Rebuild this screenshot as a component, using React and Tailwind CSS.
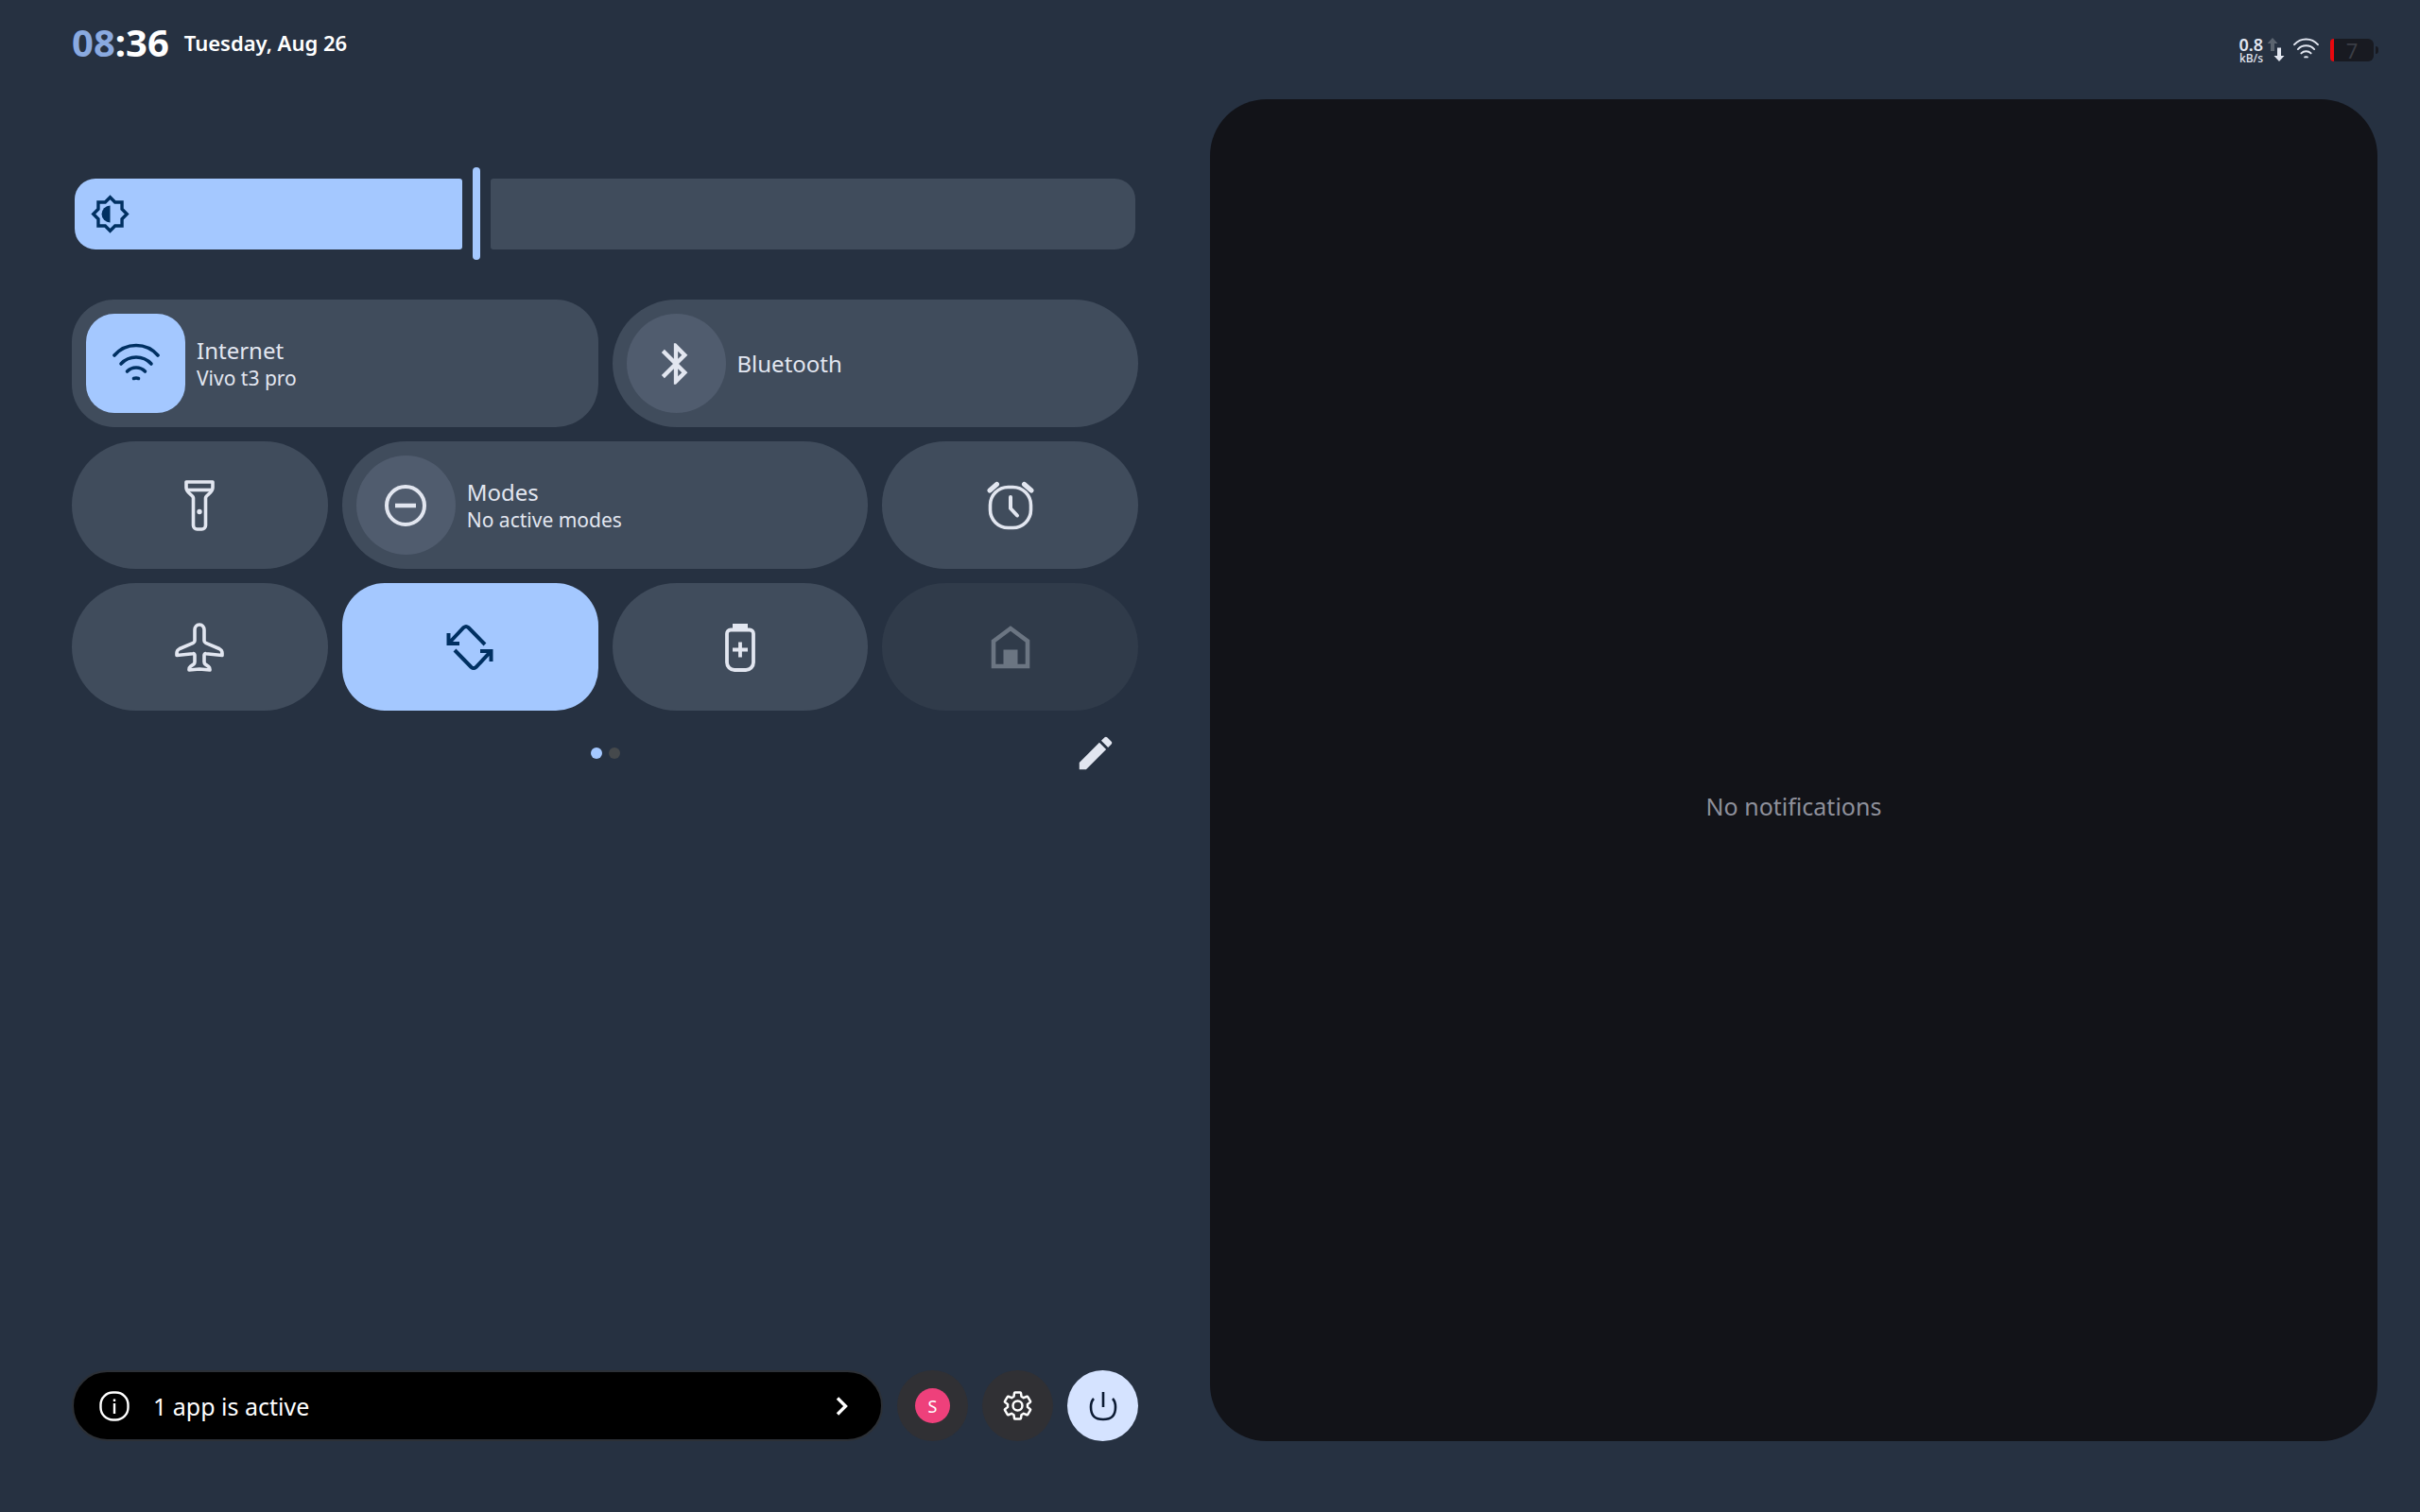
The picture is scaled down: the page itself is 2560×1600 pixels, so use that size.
import { useState } from "react"
import clsx from "clsx"
import { MdBluetooth, MdEdit } from "react-icons/md"

export default function App() {
  return (
    <div className="min-h-screen flex flex-col bg-[#263141] text-[#e2e6f0] font-['Noto_Sans','Open_Sans',sans-serif]">
      <StatusBar />
      <main className="flex-1 grid grid-cols-2 pb-[75px]">
        <section className="flex flex-col px-[76px]" aria-label="Quick settings">
          <BrightnessSlider />
          <QuickTiles />
          <PageControls />
          <FooterActions />
        </section>
        <section className="mr-[45px] rounded-[60px] bg-[#121318] flex items-center justify-center pt-[75px]">
          <p className="text-[25px] leading-8 text-[#8e909b]">No notifications</p>
        </section>
      </main>
    </div>
  )
}

function StatusBar() {
  return (
    <header className="h-[105px] flex justify-between pl-[76px] pr-[44px]">
      <div className="h-[90px] flex items-center gap-4">
        <time className="text-[40px] leading-none font-bold text-white">
          <span className="text-[#8aaae0]">08</span>:36
        </time>
        <span className="text-[22px] leading-none font-semibold text-white">Tuesday, Aug 26</span>
      </div>
      <div className="flex items-center">
        <div className="flex flex-col items-end mr-1">
          <span className="text-[18px] leading-[18px] font-semibold">0.8</span>
          <span className="text-[12px] leading-3 font-medium">kB/s</span>
        </div>
        <TrafficArrows />
        <WifiIcon className="w-[27px] h-[22px] mr-3 -mt-1" />
        <Battery level={7} />
      </div>
    </header>
  )
}

function Battery({ level }) {
  return (
    <div className="flex items-center gap-[2px]">
      <div className="relative w-[46px] h-6 rounded-md bg-[#181a21] flex items-center justify-center">
        <div className="absolute inset-y-0 left-0 rounded-l-md bg-[#e8080e]" style={{ width: `${level + 2}%` }} />
        <span className="text-[22px] leading-6 text-[#3a3d45]">{level}</span>
      </div>
      <div className="w-[3px] h-2 rounded-r-full bg-[#181a21]" />
    </div>
  )
}

function BrightnessSlider() {
  const [value, setValue] = useState(37.5)

  return (
    <div className="relative mt-[72px] mx-[3px] h-[98px] flex items-center gap-[11px]">
      <div
        className="h-[75px] basis-0 rounded-l-[22px] rounded-r-[3px] bg-[#a4c8ff] flex items-center overflow-hidden"
        style={{ flexGrow: value }}
      >
        <BrightnessIcon />
      </div>
      <div className="w-2 h-full rounded-full bg-[#a4c8ff]" />
      <div
        className="h-[75px] basis-0 rounded-l-[3px] rounded-r-[22px] bg-[#404c5c]"
        style={{ flexGrow: 100 - value }}
      />
      <input
        type="range"
        min="0"
        max="100"
        step="0.5"
        value={value}
        onChange={(e) => setValue(Number(e.target.value))}
        aria-label="Display brightness"
        className="absolute inset-0 w-full h-full opacity-0 cursor-pointer"
      />
    </div>
  )
}

function QuickTiles() {
  return (
    <div className="mt-[42px] grid grid-cols-4 gap-[15px]">
      <WideTile icon={<WifiIcon className="w-[50px] h-[40px] -mt-1" />} title="Internet" subtitle="Vivo t3 pro" active />
      <WideTile icon={<MdBluetooth className="w-[52px] h-[52px]" />} title="Bluetooth" />
      <Tile label="Flashlight"><FlashlightIcon /></Tile>
      <WideTile icon={<ModesIcon />} title="Modes" subtitle="No active modes" />
      <Tile label="Alarm"><AlarmIcon /></Tile>
      <Tile label="Airplane mode"><AirplaneIcon /></Tile>
      <Tile label="Auto-rotate" active><RotateIcon /></Tile>
      <Tile label="Battery saver"><BatterySaverIcon /></Tile>
      <Tile label="Home controls" disabled><HomeIcon /></Tile>
    </div>
  )
}

function WideTile({ icon, title, subtitle, active }) {
  return (
    <button
      className={clsx(
        "col-span-2 h-[135px] bg-[#404c5c] flex items-center gap-3 px-[15px] text-left",
        active ? "rounded-[45px]" : "rounded-[68px]"
      )}
    >
      <span
        className={clsx(
          "w-[105px] h-[105px] flex items-center justify-center shrink-0",
          active ? "rounded-[30px] bg-[#a4c8ff] text-[#003062]" : "rounded-full bg-[#505c6e]"
        )}
      >
        {icon}
      </span>
      <span className="flex flex-col">
        <span className="text-[24px] leading-[30px]">{title}</span>
        {subtitle && <span className="text-[21px] leading-7">{subtitle}</span>}
      </span>
    </button>
  )
}

function Tile({ label, active, disabled, children }) {
  return (
    <button
      aria-label={label}
      disabled={disabled}
      className={clsx(
        "h-[135px] flex items-center justify-center",
        active && "rounded-[45px] bg-[#a4c8ff] text-[#003062]",
        disabled && "rounded-[68px] bg-[#303b4a] text-[#6b7582]",
        !active && !disabled && "rounded-[68px] bg-[#404c5c]"
      )}
    >
      {children}
    </button>
  )
}

function PageControls() {
  return (
    <div className="mt-[22px] h-[46px] grid grid-cols-3 items-center">
      <div className="col-start-2 flex justify-center gap-[7px]">
        <span className="w-3 h-3 rounded-full bg-[#a4c8ff]" />
        <span className="w-3 h-3 rounded-full bg-[#45494c]" />
      </div>
      <button aria-label="Edit tiles" className="justify-self-end mr-[22px]">
        <MdEdit className="w-[46px] h-[46px]" />
      </button>
    </div>
  )
}

function FooterActions() {
  return (
    <div className="mt-auto flex items-center gap-[15px]">
      <button className="flex-1 h-[75px] rounded-full border-2 border-[#2c3036] bg-black text-white flex items-center pl-[27px] pr-[34px]">
        <InfoIcon />
        <span className="ml-[25px] text-[25px] leading-8">1 app is active</span>
        <ChevronIcon />
      </button>
      <button aria-label="Switch user" className="w-[75px] h-[75px] rounded-full bg-[#303034] flex items-center justify-center">
        <span className="w-[37px] h-[37px] rounded-full bg-[#ee407b] text-white text-[18px] leading-none flex items-center justify-center">
          S
        </span>
      </button>
      <button aria-label="Settings" className="w-[75px] h-[75px] rounded-full bg-[#303034] text-white flex items-center justify-center">
        <GearIcon />
      </button>
      <button aria-label="Power" className="w-[75px] h-[75px] rounded-full bg-[#d5e3ff] text-[#0c1b33] flex items-center justify-center">
        <PowerIcon />
      </button>
    </div>
  )
}

/* Icons */

function WifiIcon({ className }) {
  return (
    <svg className={className} viewBox="0 0 50 40" fill="none" stroke="currentColor" strokeWidth="3.6" strokeLinecap="round">
      <path d="M2 13A30.4 30.4 0 0 1 48 13" />
      <path d="M9 22A21.8 21.8 0 0 1 41 22" />
      <path d="M15.5 30A13.3 13.3 0 0 1 34.5 30" />
      <path d="M22.5 37.5A7 7 0 0 1 27.5 37.5" />
    </svg>
  )
}

function TrafficArrows() {
  return (
    <svg className="mr-2" width="20" height="28" viewBox="0 0 20 28">
      <path d="M6 1l5.5 6H8v8H4V7H.5z" fill="#5b646f" />
      <path d="M11 11.5h4V20h3.5L13 26l-5.5-6H11z" fill="currentColor" />
    </svg>
  )
}

function BrightnessIcon() {
  return (
    <svg className="ml-4 shrink-0 text-[#003062]" width="43" height="43" viewBox="0 0 24 24">
      <path
        d="M12 2.1L9.1 5H5v4.1L2.1 12L5 14.9V19h4.1l2.9 2.9l2.9-2.9H19v-4.1l2.9-2.9L19 9.1V5h-4.1z"
        fill="none"
        stroke="currentColor"
        strokeWidth="1.9"
      />
      <path d="M12 7a5 5 0 0 0 0 10z" fill="currentColor" />
    </svg>
  )
}

function FlashlightIcon() {
  return (
    <svg width="32" height="54" viewBox="0 0 32 54" fill="none" stroke="currentColor" strokeWidth="3.6" strokeLinejoin="round">
      <path d="M2 2h28v6c0 6-7.5 7.5-7.5 11v29a4 4 0 0 1-4 4h-5a4 4 0 0 1-4-4V19C9.5 15.5 2 14 2 8z" />
      <path d="M2 10.5h28" />
      <circle cx="16" cy="33.5" r="2.7" fill="currentColor" stroke="none" />
    </svg>
  )
}

function ModesIcon() {
  return (
    <svg width="46" height="46" viewBox="0 0 46 46" fill="none" stroke="currentColor" strokeWidth="4">
      <circle cx="23" cy="23" r="20" />
      <path d="M12 23h22" strokeWidth="4.5" />
    </svg>
  )
}

function AlarmIcon() {
  return (
    <svg width="50" height="52" viewBox="0 0 50 52" fill="none" stroke="currentColor" strokeWidth="3.6" strokeLinecap="round" strokeLinejoin="round">
      <rect x="3.5" y="6.5" width="43" height="43" rx="19" />
      <path d="M3 10l7.5-6.5M47 10l-7.5-6.5" strokeWidth="5" />
      <path d="M25 17v12l7 7.5" strokeWidth="4" />
    </svg>
  )
}

function AirplaneIcon() {
  return (
    <svg width="52" height="52" viewBox="0 0 52 52" fill="none" stroke="currentColor" strokeWidth="3.6" strokeLinejoin="round">
      <path d="M26 2c-3 0-5 2.4-5 5.5v11.5c0 1.2-.5 1.8-1.6 2.3L5 27.5c-2 1-3 2.6-3 4.5v2.5l17-1.8c1.4-.2 2 .4 2 1.8v7c0 1.2-.4 1.8-1.3 2.5l-3.2 2.3c-1.2.9-1.5 1.7-1.5 3.2v.5l11-1 11 1v-.5c0-1.5-.3-2.3-1.5-3.2l-3.2-2.3c-.9-.7-1.3-1.3-1.3-2.5v-7c0-1.4.6-2 2-1.8l17 1.8V32c0-1.9-1-3.5-3-4.5l-14.4-6.2c-1.1-.5-1.6-1.1-1.6-2.3V7.5C31 4.4 29 2 26 2z" />
    </svg>
  )
}

function RotateIcon() {
  return (
    <svg width="50" height="50" viewBox="0 0 50 50" fill="none" stroke="currentColor" strokeWidth="4">
      <path d="M2.5 10v11h11.5M2.5 21L18.5 4q2.5-2 5 0L41 22" />
      <path d="M9 28l17.5 18q2.5 2 5 0L47.5 29M36 29h11.5v11" />
    </svg>
  )
}

function BatterySaverIcon() {
  return (
    <svg width="32" height="52" viewBox="0 0 32 52" fill="none" stroke="currentColor" strokeWidth="3.8">
      <path d="M6 7.5h20a4 4 0 0 1 4 4V42a8 8 0 0 1-8 8H10a8 8 0 0 1-8-8V11.5a4 4 0 0 1 4-4z" />
      <path d="M8 1h16v6H8z" fill="currentColor" stroke="none" />
      <path d="M16 20.5v16M8 28.5h16" />
    </svg>
  )
}

function HomeIcon() {
  return (
    <svg width="42" height="46" viewBox="0 0 42 46" fill="none" stroke="currentColor" strokeWidth="4.6">
      <path d="M3 16.5L21 3l18 13.5V43H3z" />
      <path d="M13.5 25.5h15V43h-15z" fill="currentColor" stroke="none" />
    </svg>
  )
}

function InfoIcon() {
  return (
    <svg width="32" height="32" viewBox="0 0 32 32" fill="none" stroke="currentColor" strokeWidth="2.4">
      <rect x="1.5" y="1.5" width="29" height="29" rx="13" />
      <path d="M16 13v11M16 8.5v2.5" />
    </svg>
  )
}

function ChevronIcon() {
  return (
    <svg className="ml-auto" width="16" height="22" viewBox="0 0 16 22" fill="none" stroke="currentColor" strokeWidth="3.4">
      <path d="M4 2.5l8.5 8.5L4 19.5" />
    </svg>
  )
}

function GearIcon() {
  return (
    <svg width="35" height="35" viewBox="0 0 24 24" fill="none" stroke="currentColor" strokeWidth="1.7" strokeLinejoin="round">
      <path d="M19.14 12.94c.04-.3.06-.61.06-.94 0-.32-.02-.64-.07-.94l2.03-1.58c.18-.14.23-.41.12-.61l-1.92-3.32c-.12-.22-.37-.29-.59-.22l-2.39.96c-.5-.38-1.03-.7-1.62-.94l-.36-2.54c-.04-.24-.24-.41-.48-.41h-3.84c-.24 0-.43.17-.47.41l-.36 2.54c-.59.24-1.13.57-1.62.94l-2.39-.96c-.22-.08-.47 0-.59.22L2.74 8.87c-.12.21-.08.47.12.61l2.03 1.58c-.05.3-.09.63-.09.94s.02.64.07.94l-2.03 1.58c-.18.14-.23.41-.12.61l1.92 3.32c.12.22.37.29.59.22l2.39-.96c.5.38 1.03.7 1.62.94l.36 2.54c.05.24.24.41.48.41h3.84c.24 0 .44-.17.47-.41l.36-2.54c.59-.24 1.13-.56 1.62-.94l2.39.96c.22.08.47 0 .59-.22l1.92-3.32c.12-.22.07-.47-.12-.61l-2.01-1.58z" />
      <circle cx="12" cy="12" r="3.4" />
    </svg>
  )
}

function PowerIcon() {
  return (
    <svg width="30" height="32" viewBox="0 0 30 32" fill="none" stroke="currentColor" strokeWidth="2.6">
      <path d="M15 1v16" />
      <path d="M5 8C2 11 2 14 2 17c0 9 4 13 13 13s13-4 13-13c0-3 0-6-3-9" />
    </svg>
  )
}
